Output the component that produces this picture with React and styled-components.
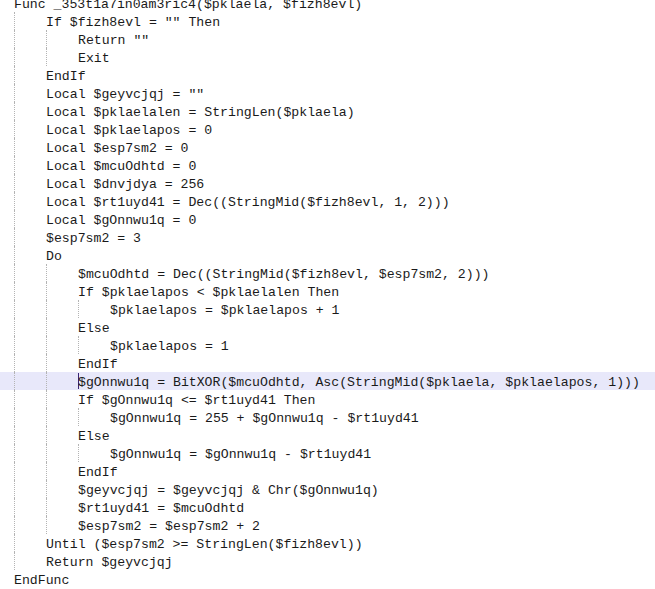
import React from "react";
import styled, { createGlobalStyle } from "styled-components";

const Global = createGlobalStyle`
  html, body {
    margin: 0;
    padding: 0;
    background: #ffffff;
  }
`;

// editor viewport, scrolled a few px down like the screenshot
const Viewport = styled.div`
  width: 655px;
  height: 589px;
  overflow: hidden;
  background: #ffffff;
`;

const Code = styled.div`
  margin-top: -6px;
  font-family: "Liberation Mono", "Courier New", monospace;
  font-size: 13.2px;
  color: #1a1a1a;
`;

const Line = styled.div`
  display: flex;
  height: 18px;
  padding-left: 14px;
  white-space: pre;
  background: ${(p) => (p.$active ? "#e8e8fa" : "transparent")};
`;

const Indent = styled.span`
  flex: none;
  width: 32px;
  box-sizing: border-box;
  border-left: 1px dotted #b4b4b4;
`;

const Caret = styled.span`
  flex: none;
  width: 1px;
  margin: 1px -1px 1px 0;
  background: #3b2474;
`;

const Text = styled.span`
  padding-top: 3px;
  line-height: 15px;
`;

const lines = [
  [0, "Func _353t1a7in0am3ric4($pklaela, $fizh8evl)"],
  [1, 'If $fizh8evl = "" Then'],
  [2, 'Return ""'],
  [2, "Exit"],
  [1, "EndIf"],
  [1, 'Local $geyvcjqj = ""'],
  [1, "Local $pklaelalen = StringLen($pklaela)"],
  [1, "Local $pklaelapos = 0"],
  [1, "Local $esp7sm2 = 0"],
  [1, "Local $mcuOdhtd = 0"],
  [1, "Local $dnvjdya = 256"],
  [1, "Local $rt1uyd41 = Dec((StringMid($fizh8evl, 1, 2)))"],
  [1, "Local $gOnnwu1q = 0"],
  [1, "$esp7sm2 = 3"],
  [1, "Do"],
  [2, "$mcuOdhtd = Dec((StringMid($fizh8evl, $esp7sm2, 2)))"],
  [2, "If $pklaelapos < $pklaelalen Then"],
  [3, "$pklaelapos = $pklaelapos + 1"],
  [2, "Else"],
  [3, "$pklaelapos = 1"],
  [2, "EndIf"],
  [2, "$gOnnwu1q = BitXOR($mcuOdhtd, Asc(StringMid($pklaela, $pklaelapos, 1)))"],
  [2, "If $gOnnwu1q <= $rt1uyd41 Then"],
  [3, "$gOnnwu1q = 255 + $gOnnwu1q - $rt1uyd41"],
  [2, "Else"],
  [3, "$gOnnwu1q = $gOnnwu1q - $rt1uyd41"],
  [2, "EndIf"],
  [2, "$geyvcjqj = $geyvcjqj & Chr($gOnnwu1q)"],
  [2, "$rt1uyd41 = $mcuOdhtd"],
  [2, "$esp7sm2 = $esp7sm2 + 2"],
  [1, "Until ($esp7sm2 >= StringLen($fizh8evl))"],
  [1, "Return $geyvcjqj"],
  [0, "EndFunc"],
];

const ACTIVE = 21;

export default function App() {
  return (
    <Viewport>
      <Global />
      <Code>
        {lines.map(([level, text], i) => (
          <Line key={i} $active={i === ACTIVE}>
            {Array.from({ length: level }).map((_, k) => (
              <Indent key={k} />
            ))}
            {i === ACTIVE && <Caret />}
            <Text>{text}</Text>
          </Line>
        ))}
      </Code>
    </Viewport>
  );
}
